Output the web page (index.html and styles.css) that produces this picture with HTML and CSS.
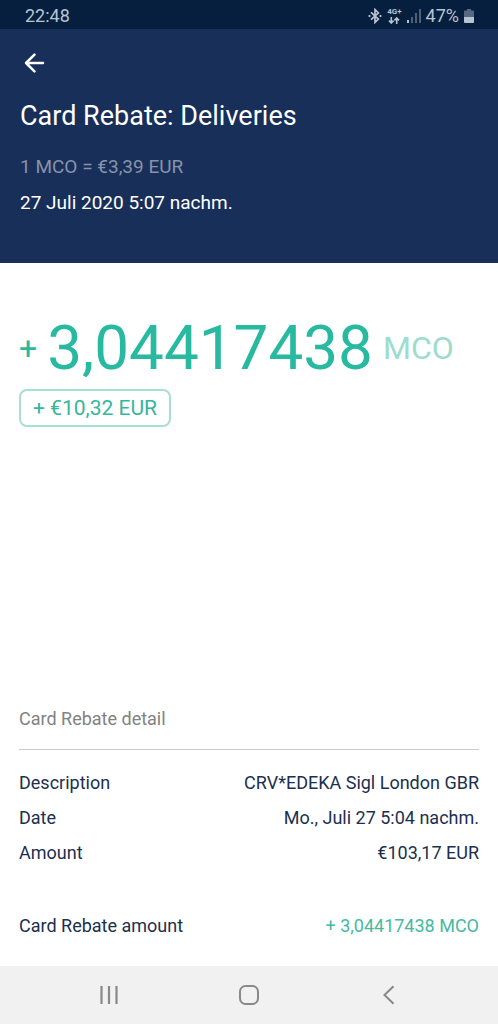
FILE: index.html
```html
<!DOCTYPE html>
<html lang="de">
<head>
<meta charset="utf-8">
<meta name="viewport" content="width=device-width, initial-scale=1">
<title>Card Rebate: Deliveries</title>
<link rel="stylesheet" href="styles.css">
</head>
<body>
<div class="status">
  <span>22:48</span>
  <div class="status-icons">
    <svg width="14" height="16" viewBox="0 0 14 16" fill="none" stroke="currentColor" stroke-width="1.7"><path d="M3 4.3 10.4 11 7 14.4V1.6L10.4 5 3 11.7"/><path d="M.6 8h1.8M11.6 8h1.8" stroke-width="2"/></svg>
    <div class="network">
      <span class="network-type">4G+</span>
      <svg width="12" height="7" viewBox="0 0 12 7" fill="none" stroke="currentColor" stroke-width="1.6"><path d="M3.3 0v5.6M1 3.6 3.3 6 5.6 3.6M8.7 7V1.2M6.4 3.4 8.7 1 11 3.4"/></svg>
    </div>
    <svg width="14" height="15" viewBox="0 0 14 15" fill="currentColor"><path d="M0 12h2v3H0z"/><path opacity=".4" d="M4 9h2v6H4zM8 5h2v10H8zM12 1h2v14h-2z"/></svg>
    <span>47%</span>
    <svg width="10" height="14" viewBox="0 0 10 14" fill="currentColor"><path opacity=".45" d="M3 0h4v1.5h2a1 1 0 0 1 1 1V8H0V2.500a1 1 0 0 1 1-1h2z"/><path d="M0 8h10v5a1 1 0 0 1-1 1H1a1 1 0 0 1-1-1z"/></svg>
  </div>
</div>
<header class="header">
  <button class="back" type="button" aria-label="Back">
    <svg width="28" height="24" viewBox="0 0 28 24" fill="none" stroke="currentColor" stroke-width="2.500" stroke-linecap="round" stroke-linejoin="round"><path d="M23 12H6M14.500 3.700 6 12l8.500 8.300"/></svg>
  </button>
  <h1 class="title">Card Rebate: Deliveries</h1>
  <p class="rate">1 MCO = €3,39 EUR</p>
  <p class="time">27 Juli 2020 5:07 nachm.</p>
</header>
<main class="content">
  <div class="amount">
    <span class="sign">+</span>
    <span class="value">3,04417438</span>
    <span class="unit">MCO</span>
  </div>
  <div class="fiat">+ €10,32 EUR</div>
  <section class="details">
    <h2 class="details-title">Card Rebate detail</h2>
    <dl class="rows">
      <div class="row"><dt>Description</dt><dd>CRV*EDEKA Sigl London GBR</dd></div>
      <div class="row"><dt>Date</dt><dd>Mo., Juli 27 5:04 nachm.</dd></div>
      <div class="row"><dt>Amount</dt><dd>€103,17 EUR</dd></div>
      <div class="row total"><dt>Card Rebate amount</dt><dd>+ 3,04417438 MCO</dd></div>
    </dl>
  </section>
</main>
<nav class="nav">
  <button type="button" aria-label="Recent apps"><svg width="20" height="20" viewBox="0 0 20 20" fill="none" stroke="currentColor" stroke-width="2.200"><path d="M2.500 1v18M10 1v18M17.500 1v18"/></svg></button>
  <button type="button" aria-label="Home"><svg width="20" height="20" viewBox="0 0 20 20" fill="none" stroke="currentColor" stroke-width="2"><rect x="1" y="1" width="18" height="18" rx="5.500"/></svg></button>
  <button type="button" aria-label="Back"><svg width="20" height="20" viewBox="0 0 20 20" fill="none" stroke="currentColor" stroke-width="2"><path d="M14.500 1.200 5.500 10l9 8.800"/></svg></button>
</nav>
</body>
</html>
```
FILE: styles.css
```css
* {
  box-sizing: border-box;
}

body {
  margin: 0;
  min-height: 100vh;
  display: flex;
  flex-direction: column;
  background: #fff;
  color: #1b2f4f;
  font-family: Roboto, sans-serif;
  font-size: 19px;
  line-height: 24px;
}

h1, h2, p, dl, dd {
  margin: 0;
  font-weight: 400;
}

button {
  display: flex;
  padding: 0;
  border: 0;
  background: none;
  color: inherit;
}

.status {
  display: flex;
  justify-content: space-between;
  align-items: center;
  height: 29px;
  padding: 2px 24px 0 25px;
  background: #071f3e;
  color: #b8c3d2;
  font-size: 18px;
}

.status-icons {
  display: flex;
  align-items: center;
  gap: 5px;
}

.network {
  display: flex;
  flex-direction: column;
  align-items: center;
  gap: 1px;
}

.network-type {
  font-size: 8px;
  line-height: 8px;
  font-weight: 700;
}

.header {
  padding: 22px 20px 48px;
  background: #172f59;
  color: #fff;
}

.title {
  margin-top: 25px;
  font-size: 27px;
  line-height: 32px;
}

.rate {
  margin-top: 23px;
  color: #8793aa;
}

.time {
  margin-top: 12px;
}

.content {
  flex: 1;
  display: flex;
  flex-direction: column;
  padding: 49px 19px 28px;
}

.amount {
  display: flex;
  align-items: center;
  color: #27baa0;
}

.sign {
  font-size: 32px;
  line-height: 40px;
}

.value {
  margin-left: 10px;
  font-size: 62px;
  line-height: 72px;
}

.unit {
  margin-left: 10px;
  font-size: 32px;
  line-height: 40px;
  color: #9edccf;
}

.fiat {
  align-self: flex-start;
  margin-top: 5px;
  padding: 5px 12px;
  border: 2px solid #a8dfd2;
  border-radius: 8px;
  color: #35b69c;
  font-size: 21px;
}

.details {
  margin-top: auto;
}

.details-title {
  padding-bottom: 18px;
  border-bottom: 1px solid #ccc;
  color: #828282;
  font-size: 18px;
}

.rows {
  display: flex;
  flex-direction: column;
  gap: 11px;
  padding-top: 21px;
}

.row {
  display: flex;
  justify-content: space-between;
  gap: 16px;
  font-size: 18px;
}

.total {
  margin-top: 38px;
}

.total dd {
  color: #45b9a1;
}

.nav {
  display: flex;
  justify-content: space-between;
  align-items: center;
  height: 58px;
  padding: 0 99px;
  background: #f1f1f1;
  color: #898989;
}
```
